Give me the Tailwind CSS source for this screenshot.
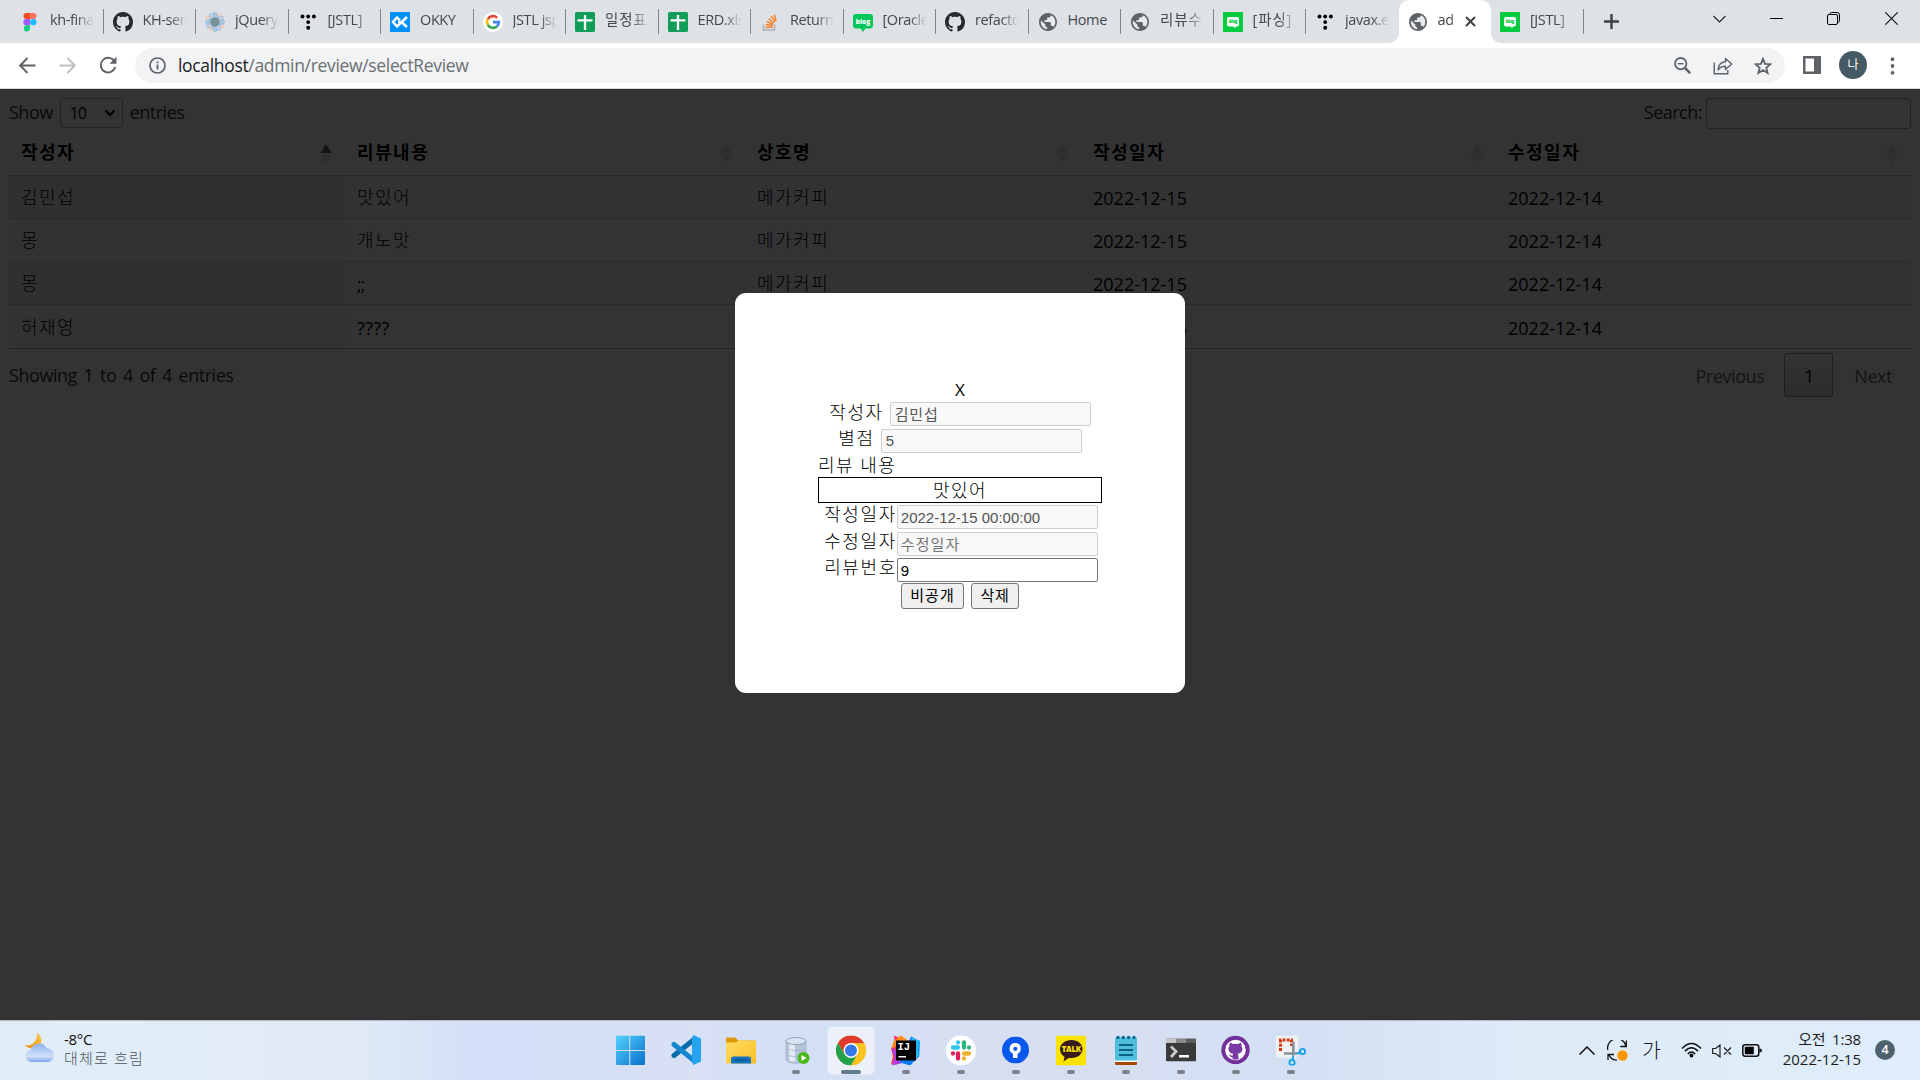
<!DOCTYPE html>
<html lang="ko">
<head>
<meta charset="utf-8">
<title>admin review</title>
<script src="https://cdn.jsdelivr.net/npm/@tailwindcss/browser@4"></script>
</head>
<body class="w-[1920px] h-[1080px] overflow-hidden flex flex-col bg-white text-black font-['Open_Sans','Noto_Sans_CJK_KR',sans-serif]">
<svg class="hidden">
  <symbol id="github" viewBox="0 0 16 16"><path fill="currentColor" d="M8 0C3.58 0 0 3.58 0 8c0 3.54 2.29 6.53 5.47 7.59.4.07.55-.17.55-.38 0-.19-.01-.82-.01-1.49-2.01.37-2.53-.49-2.69-.94-.09-.23-.48-.94-.82-1.13-.28-.15-.68-.52-.01-.53.63-.01 1.08.58 1.23.82.72 1.21 1.87.87 2.33.66.07-.52.28-.87.51-1.07-1.78-.2-3.64-.89-3.64-3.95 0-.87.31-1.59.82-2.15-.08-.2-.36-1.02.08-2.12 0 0 .67-.21 2.2.82.64-.18 1.32-.27 2-.27s1.36.09 2 .27c1.53-1.04 2.2-.82 2.2-.82.44 1.1.16 1.92.08 2.12.51.56.82 1.27.82 2.15 0 3.07-1.87 3.75-3.65 3.95.29.25.54.73.54 1.48 0 1.07-.01 1.93-.01 2.2 0 .21.15.46.55.38A8.01 8.01 0 0 0 16 8c0-4.42-3.58-8-8-8z"/></symbol>
  <symbol id="globe" viewBox="0 0 24 24"><circle cx="12" cy="12" r="9.6" fill="#e8eaed"/><path fill="#5f6368" d="M12 1.2C6.040 1.200 1.200 6.040 1.200 12S6.040 22.800 12 22.800 22.800 17.960 22.800 12 17.960 1.200 12 1.200zm-1 19.400c-4.300-.5-7.700-4.200-7.700-8.600 0-.7.1-1.300.2-1.900L8.800 15v1.100c0 1.200 1 2.200 2.200 2.200v2.300zm7.500-2.700c-.3-.9-1.100-1.500-2.100-1.500h-1.100v-3.300c0-.6-.5-1.100-1.100-1.100H7.700V9.800h2.200c.6 0 1.100-.5 1.100-1.100V6.500h2.200c1.200 0 2.200-1 2.200-2.200v-.4c3.200 1.300 5.400 4.400 5.400 8.100 0 2.300-.9 4.400-2.300 5.900z"/></symbol>
  <symbol id="tistory" viewBox="0 0 20 20"><g fill="#000"><circle cx="4.500" cy="4.500" r="1.950"/><circle cx="10.200" cy="4.500" r="1.950"/><circle cx="15.900" cy="4.500" r="1.950"/><circle cx="10.200" cy="10.100" r="1.950"/><circle cx="10.200" cy="15.700" r="1.950"/></g></symbol>
  <symbol id="sheet" viewBox="0 0 20 20"><rect width="20" height="20" rx="1.600" fill="#109d58"/><path d="M10 3v15M2.500 8.300h15" stroke="#fff" stroke-width="2.300"/></symbol>
  <symbol id="naver" viewBox="0 0 20 20"><rect width="20" height="20" fill="#06cb41"/><path fill="#fff" d="M6 5h8q2 0 2 2v5.500q0 2-2 2h-.8L12 16l-1.500-1.500H6q-2 0-2-2V7q0-2 2-2z"/><text x="10" y="11" text-anchor="middle" font-size="4.500" font-weight="800" fill="#06cb41">blog</text></symbol>
  <symbol id="sort" viewBox="0 0 12 20"><path d="M6 0l5.800 9H.2zM6 19.500L11.800 10.500H.2z" fill="#000" opacity=".125"/></symbol>
</svg>

<!-- tab strip -->
<header class="h-[43px] shrink-0 bg-[#dee1e6] flex text-[14.500px] text-[#45494d] tracking-[-0.4px]">
  <nav class="flex pl-[11px] h-full w-[1584px] shrink-0 [&_span]:-mt-[3px]">
    <div class="w-[92.500px] shrink-0 flex items-center relative pl-[9px]"><svg class="size-5 shrink-0" viewBox="0 0 20 20"><path fill="#f24e1e" d="M6.500 1H10v6H6.500a3 3 0 010-6z"/><path fill="#ff7262" d="M10 1h3.500a3 3 0 010 6H10z"/><path fill="#a259ff" d="M10 7v6.300H6.500a3.150 3.150 0 010-6.300z"/><circle cx="13.300" cy="10.200" r="3.150" fill="#1abcfe"/><path fill="#0acf83" d="M6.500 13.300H10v3a3.100 3.100 0 11-3.500-3z"/></svg><span class="ml-2.5 w-[44px] overflow-hidden whitespace-nowrap mask-r-from-60%">kh-final</span><i class="absolute right-0 top-[9px] w-px h-[25px] bg-[#80868b]"></i></div>
    <div class="w-[92.500px] shrink-0 flex items-center relative pl-[9px]"><svg class="size-5 shrink-0 text-[#24292f]"><use href="#github"/></svg><span class="ml-2.5 w-[44px] overflow-hidden whitespace-nowrap mask-r-from-60%">KH-semi</span><i class="absolute right-0 top-[9px] w-px h-[25px] bg-[#80868b]"></i></div>
    <div class="w-[92.500px] shrink-0 flex items-center relative pl-[9px]"><svg class="size-5 shrink-0" viewBox="0 0 20 20"><g fill="#f9d9c0" fill-opacity=".7" stroke="#f0a884" stroke-width=".5"><ellipse cx="10" cy="10" rx="9.800" ry="3.400" transform="rotate(30 10 10)"/><ellipse cx="10" cy="10" rx="9.800" ry="3.400" transform="rotate(120 10 10)"/></g><g fill="#8cc5e6" fill-opacity=".6" stroke="#62aedb" stroke-width=".5"><ellipse cx="10" cy="10" rx="9.800" ry="3.400"/><ellipse cx="10" cy="10" rx="9.800" ry="3.400" transform="rotate(90 10 10)"/></g><g fill="#b9c9ea" fill-opacity=".5" stroke="#7fa8d8" stroke-width=".5"><ellipse cx="10" cy="10" rx="9.800" ry="3.400" transform="rotate(60 10 10)"/><ellipse cx="10" cy="10" rx="9.800" ry="3.400" transform="rotate(150 10 10)"/></g><circle cx="10" cy="10" r="4.600" fill="#708a8c" opacity=".85"/></svg><span class="ml-2.5 w-[44px] overflow-hidden whitespace-nowrap mask-r-from-60%">jQuery</span><i class="absolute right-0 top-[9px] w-px h-[25px] bg-[#80868b]"></i></div>
    <div class="w-[92.500px] shrink-0 flex items-center relative pl-[9px]"><svg class="size-5 shrink-0"><use href="#tistory"/></svg><span class="ml-2.5 w-[44px] overflow-hidden whitespace-nowrap mask-r-from-60%">[JSTL]</span><i class="absolute right-0 top-[9px] w-px h-[25px] bg-[#80868b]"></i></div>
    <div class="w-[92.500px] shrink-0 flex items-center relative pl-[9px]"><svg class="size-5 shrink-0" viewBox="0 0 20 20"><path fill="#0090f9" d="M0 0h20v20H0z"/><path d="M10 8.300L7 5.500 3 10l4 4.500 10-9.500M11.500 10l5.500 5" fill="none" stroke="#fff" stroke-width="2.500"/><path d="M8 10h3" stroke="#fff" stroke-width="2"/></svg><span class="ml-2.5 w-[44px] overflow-hidden whitespace-nowrap mask-r-from-80%">OKKY</span><i class="absolute right-0 top-[9px] w-px h-[25px] bg-[#80868b]"></i></div>
    <div class="w-[92.500px] shrink-0 flex items-center relative pl-[9px]"><svg class="size-5 shrink-0" viewBox="0 0 20 20"><circle cx="10" cy="10" r="10" fill="#fff"/><g fill="none" stroke-width="2.600"><path stroke="#ea4335" d="M4.800 7.200A5.900 5.900 0 0114.200 5.800"/><path stroke="#fbbc05" d="M4.800 12.800a5.900 5.900 0 010-5.700"/><path stroke="#34a853" d="M4.800 12.800a5.900 5.900 0 009.200 1.500"/><path stroke="#4285f4" d="M10 10.100h5.900a5.900 5.900 0 01-1.900 4.200"/></g></svg><span class="ml-2.5 w-[44px] overflow-hidden whitespace-nowrap mask-r-from-60%">JSTL jsp</span><i class="absolute right-0 top-[9px] w-px h-[25px] bg-[#80868b]"></i></div>
    <div class="w-[92.500px] shrink-0 flex items-center relative pl-[9px]"><svg class="size-5 shrink-0"><use href="#sheet"/></svg><span class="ml-2.5 w-[44px] overflow-hidden whitespace-nowrap mask-r-from-60% tracking-[0.9px]">일정표 -</span><i class="absolute right-0 top-[9px] w-px h-[25px] bg-[#80868b]"></i></div>
    <div class="w-[92.500px] shrink-0 flex items-center relative pl-[9px]"><svg class="size-5 shrink-0"><use href="#sheet"/></svg><span class="ml-2.5 w-[44px] overflow-hidden whitespace-nowrap mask-r-from-60%">ERD.xlsx</span><i class="absolute right-0 top-[9px] w-px h-[25px] bg-[#80868b]"></i></div>
    <div class="w-[92.500px] shrink-0 flex items-center relative pl-[9px]"><svg class="size-5 shrink-0" viewBox="0 0 20 20" fill="none"><path d="M3.500 12.500V18h11v-5.500" stroke="#a8adb3" stroke-width="1.500"/><path d="M5.600 15.300h7M5.800 12.400l6.900 1.100M6.700 9.400l6.400 2.900M8.600 6.500l5.300 4.500M11.300 4.200l3.900 5.700M14.200 2.800l2 6.500" stroke="#f48024" stroke-width="1.500"/></svg><span class="ml-2.5 w-[44px] overflow-hidden whitespace-nowrap mask-r-from-60%">Return v</span><i class="absolute right-0 top-[9px] w-px h-[25px] bg-[#80868b]"></i></div>
    <div class="w-[92.500px] shrink-0 flex items-center relative pl-[9px]"><svg class="size-5 shrink-0" viewBox="0 0 20 20"><path fill="#03c75a" d="M3 2h14q3 0 3 3v8.500q0 3-3 3h-4.500L10 20l-2.500-3.500H3q-3 0-3-3V5q0-3 3-3z"/><text x="10" y="11.600" text-anchor="middle" font-size="6.500" font-weight="800" letter-spacing="0" fill="#fff">blog</text></svg><span class="ml-2.5 w-[44px] overflow-hidden whitespace-nowrap mask-r-from-60%">[Oracle]</span><i class="absolute right-0 top-[9px] w-px h-[25px] bg-[#80868b]"></i></div>
    <div class="w-[92.500px] shrink-0 flex items-center relative pl-[9px]"><svg class="size-5 shrink-0 text-[#24292f]"><use href="#github"/></svg><span class="ml-2.5 w-[44px] overflow-hidden whitespace-nowrap mask-r-from-60%">refactor</span><i class="absolute right-0 top-[9px] w-px h-[25px] bg-[#80868b]"></i></div>
    <div class="w-[92.500px] shrink-0 flex items-center relative pl-[9px]"><svg class="size-5 shrink-0"><use href="#globe"/></svg><span class="ml-2.5 w-[44px] overflow-hidden whitespace-nowrap">Home</span><i class="absolute right-0 top-[9px] w-px h-[25px] bg-[#80868b]"></i></div>
    <div class="w-[92.500px] shrink-0 flex items-center relative pl-[9px]"><svg class="size-5 shrink-0"><use href="#globe"/></svg><span class="ml-2.5 w-[44px] overflow-hidden whitespace-nowrap mask-r-from-60% tracking-[0.9px]">리뷰수정</span><i class="absolute right-0 top-[9px] w-px h-[25px] bg-[#80868b]"></i></div>
    <div class="w-[92.500px] shrink-0 flex items-center relative pl-[9px]"><svg class="size-5 shrink-0"><use href="#naver"/></svg><span class="ml-2.5 w-[44px] overflow-hidden whitespace-nowrap mask-r-from-60% tracking-[0.9px]">[파싱]</span><i class="absolute right-0 top-[9px] w-px h-[25px] bg-[#80868b]"></i></div>
    <div class="w-[92.500px] shrink-0 flex items-center relative pl-[9px]"><svg class="size-5 shrink-0"><use href="#tistory"/></svg><span class="ml-2.5 w-[44px] overflow-hidden whitespace-nowrap mask-r-from-60%">javax.el</span></div>
    <div class="w-[92.500px] shrink-0 flex items-center relative pl-[9px] bg-white rounded-t-[10px] text-[#3c4043]"><svg class="absolute -left-[10px] bottom-0 size-[10px]" viewBox="0 0 10 10"><path fill="#fff" d="M10 0v10H0A10 10 0 0010 0z"/></svg><svg class="absolute -right-[10px] bottom-0 size-[10px]" viewBox="0 0 10 10"><path fill="#fff" d="M0 0v10h10A10 10 0 010 0z"/></svg><svg class="size-5 shrink-0"><use href="#globe"/></svg><span class="ml-2.5 w-[17px] overflow-hidden whitespace-nowrap mask-r-from-80%">admin</span><svg class="size-[11px] ml-[10px]" viewBox="0 0 11 11"><path d="M1 1l9 9M10 1l-9 9" stroke="#3c4043" stroke-width="2"/></svg></div>
    <div class="w-[92.500px] shrink-0 flex items-center relative pl-[9px]"><svg class="size-5 shrink-0"><use href="#naver"/></svg><span class="ml-2.5 w-[44px] overflow-hidden whitespace-nowrap mask-r-from-60%">[JSTL]</span><i class="absolute right-0 top-[9px] w-px h-[25px] bg-[#80868b]"></i></div>
  </nav>
  <svg class="size-[15px] mt-[14px] ml-5" viewBox="0 0 15 15"><path d="M7.500 0v15M0 7.500h15" stroke="#3c4043" stroke-width="2.400"/></svg>
  <div class="flex ml-auto h-[37px] items-center pr-[22px]" >
    <svg class="w-[13px] h-[8px] mr-[44px]" viewBox="0 0 13 8"><path d="M.5 1l6 6 6-6" fill="none" stroke="#222" stroke-width="1.100"/></svg>
    <svg class="w-[13px] h-[13px] mr-[44px]" viewBox="0 0 13 13"><path d="M0 6.500h13" stroke="#000"/></svg>
    <svg class="size-[13px] mr-[45px]" viewBox="0 0 13 13"><g fill="none" stroke="#000"><rect x=".5" y="2.500" width="10" height="10" rx="1.500"/><path d="M3 2.500V2Q3 .5 4.500.5H10q2.500 0 2.500 2.500v5.500Q12.500 10 11 10.500"/></g></svg>
    <svg class="size-[13px]" viewBox="0 0 13 13"><path d="M.3.3l12.400 12.400M12.700.3L.3 12.700" stroke="#111" stroke-width="1.100"/></svg>
  </div>
</header>

<!-- toolbar -->
<div class="h-[46px] shrink-0 bg-white border-b border-[#d5d7da] flex items-center pl-[19px] pr-[25px]">
  <svg class="size-[17px]" viewBox="0 0 17 17"><path d="M16.500 8.500H1.500M8.500 1L1.200 8.500 8.500 16" fill="none" stroke="#5f6368" stroke-width="1.900"/></svg>
  <svg class="size-[17px] ml-[23px]" viewBox="0 0 17 17"><path d="M.5 8.500h15M8.500 1l7.300 7.500L8.500 16" fill="none" stroke="#bdc0c3" stroke-width="1.900"/></svg>
  <svg class="size-[18px] ml-[23px] -mt-px" viewBox="0 0 18 18"><path d="M15.500 5.500A7.300 7.300 0 1016.200 11" fill="none" stroke="#5f6368" stroke-width="1.900"/><path d="M17.500.8v7h-7z" fill="#5f6368"/></svg>
  <div class="ml-[18px] w-[1650px] h-[35px] rounded-full bg-[#f1f3f4] flex items-center pl-[14px] pr-[13px]">
    <svg class="size-[17px]" viewBox="0 0 17 17"><circle cx="8.500" cy="8.500" r="7.500" fill="none" stroke="#5f6368" stroke-width="1.700"/><path d="M8.500 7.600v4.900M8.500 4.500v1.800" stroke="#5f6368" stroke-width="1.800"/></svg>
    <span class="ml-3 -mt-px text-[17.500px] tracking-[-0.330px] text-[#6b6f73]"><span class="text-[#202124]">localhost</span>/admin/review/selectReview</span>
    <svg class="size-[17px] ml-auto" viewBox="0 0 17 17"><g fill="none" stroke="#5f6368" stroke-width="1.800"><circle cx="6.700" cy="6.700" r="5.700"/><path d="M11 11l5.200 5.200" stroke-width="2.500"/><path d="M3.800 6.700h5.800" stroke-width="1.400"/></g></svg>
    <svg class="w-[20px] h-[18px] ml-[22px]" viewBox="0 0 20 18"><g fill="none" stroke="#5f6368" stroke-width="1.400"><path d="M1.200 5.500v11.300h13.600V13"/><path d="M12.500 1.500L18.700 7l-6.200 5.500V9.300C9 9.300 6.800 10.300 5 13c.3-4.500 3-8 7.500-8.300z" stroke-linejoin="round"/></g></svg>
    <svg class="size-[18px] ml-[21px]" viewBox="0 0 18 18"><path d="M9 1.800l2 5 5.400.4-4.100 3.500 1.300 5.300L9 13.100 4.400 16l1.300-5.300L1.600 7.200 7 6.800z" fill="none" stroke="#5f6368" stroke-width="1.800"/></svg>
  </div>
  <svg class="size-[18px] ml-[18px] -mt-px" viewBox="0 0 18 18"><path fill="#5f6368" d="M0 0h18v18H0z"/><path fill="#fff" d="M2.500 2.500h8.500v13H2.500z"/></svg>
  <div class="size-7 ml-[18px] -mt-px rounded-full bg-[#455a64] text-white text-[12px] flex items-center justify-center">나</div>
  <svg class="w-[5px] h-[18px] ml-auto" viewBox="0 0 5 18"><g fill="#5f6368"><circle cx="2.500" cy="2.200" r="1.900"/><circle cx="2.500" cy="9" r="1.900"/><circle cx="2.500" cy="15.800" r="1.900"/></g></svg>
</div>

<!-- page -->
<main class="relative h-[931px] shrink-0 px-[9px] pt-[9px] text-[18px] leading-6">
  <div class="flex justify-between h-[31px] text-[#333] tracking-[-0.500px]">
    <div class="flex items-start"><span class="pt-[2px]">Show</span><div class="ml-[7px] w-[63px] h-[30px] border border-[#aaa] rounded-[3px] flex items-center justify-between pl-[9px] pr-[6px] text-[15.500px] text-black">10<svg class="w-[12px] h-[8px]" viewBox="0 0 12 8"><path d="M1.500 1.500L6 6l4.500-4.500" fill="none" stroke="#000" stroke-width="2.200"/></svg></div><span class="ml-[7px] pt-[2px]">entries</span></div>
    <div class="flex items-start"><span class="pt-[2px]">Search:</span><input class="ml-1 w-[205px] h-[31px] border border-[#aaa] rounded-[3px]"></div>
  </div>
  <table class="w-[1902px] table-fixed border-separate border-spacing-0 text-left">
    <colgroup><col class="w-[336px]"><col class="w-[400px]"><col class="w-[336px]"><col class="w-[415px]"><col class="w-[415px]"></colgroup>
    <thead class="tracking-[1.500px]"><tr class="h-[47px]">
      <th class="border-b border-black/30 pl-3 pr-[13px] pb-[1px]"><div class="flex items-center justify-between">작성자<svg class="w-[12px] h-[20px] mt-1" viewBox="0 0 12 20"><path d="M6 0l5.800 9H.2z" opacity=".6"/><path d="M6 19.500L11.800 10.500H.2z" opacity=".125"/></svg></div></th>
      <th class="border-b border-black/30 pl-3 pr-[13px] pb-[1px]"><div class="flex items-center justify-between">리뷰내용<svg class="w-[12px] h-[20px] mt-1"><use href="#sort"/></svg></div></th>
      <th class="border-b border-black/30 pl-3 pr-[13px] pb-[1px]"><div class="flex items-center justify-between">상호명<svg class="w-[12px] h-[20px] mt-1"><use href="#sort"/></svg></div></th>
      <th class="border-b border-black/30 pl-3 pr-[13px] pb-[1px]"><div class="flex items-center justify-between">작성일자<svg class="w-[12px] h-[20px] mt-1"><use href="#sort"/></svg></div></th>
      <th class="border-b border-black/30 pl-3 pr-[13px] pb-[1px]"><div class="flex items-center justify-between">수정일자<svg class="w-[12px] h-[20px] mt-1"><use href="#sort"/></svg></div></th>
    </tr></thead>
    <tbody class="[&_td]:pl-3 [&_td]:h-[43px] [&_td]:border-b [&_td]:border-black/15 [&_td:nth-child(n+4)]:pt-0.5">
      <tr class="bg-black/[0.023]"><td class="bg-black/[0.03] tracking-[1.500px] font-light">김민섭</td><td class="tracking-[1.500px] font-light">맛있어</td><td class="tracking-[1.500px] font-light">메가커피</td><td>2022-12-15</td><td>2022-12-14</td></tr>
      <tr><td class="bg-black/[0.019] tracking-[1.500px] font-light">몽</td><td class="tracking-[1.500px] font-light">개노맛</td><td class="tracking-[1.500px] font-light">메가커피</td><td>2022-12-15</td><td>2022-12-14</td></tr>
      <tr class="bg-black/[0.023]"><td class="bg-black/[0.03] tracking-[1.500px] font-light">몽</td><td class="pt-0.5 tracking-[-1px]">;;</td><td class="tracking-[1.500px] font-light">메가커피</td><td>2022-12-15</td><td>2022-12-14</td></tr>
    </tbody>
    <tbody class="[&_td]:pl-3 [&_td]:h-[44px] [&_td]:border-b [&_td]:border-black/30 [&_td:nth-child(n+4)]:pt-0.5">
      <tr><td class="bg-black/[0.019] tracking-[1.500px] font-light">허재영</td><td class="pt-0.5 tracking-[0.4px]">????</td><td class="tracking-[1.500px] font-light">메가커피</td><td>2022-12-15</td><td>2022-12-14</td></tr>
    </tbody>
  </table>
  <div class="flex items-center justify-between pt-[4px]">
    <div class="text-[#333] [word-spacing:2.400px] tracking-[-0.450px]">Showing 1 to 4 of 4 entries</div>
    <div class="flex items-center text-[#666] tracking-[-0.450px]"><span class="pt-0.5">Previous</span><span class="ml-5 w-[49px] h-[44px] border border-[#979797] rounded-[2px] bg-linear-to-b from-white to-[#dcdcdc] text-black flex items-center justify-center pt-px">1</span><span class="ml-[21px] mr-[19px] pt-0.5">Next</span></div>
  </div>

  <!-- modal -->
  <div class="absolute inset-0 bg-black/80"></div>
  <section class="absolute left-[735px] top-[204px] w-[450px] h-[400px] rounded-[11px] bg-white flex flex-col items-center pt-[85px] [&_span]:font-light">
    <div class="h-[23px] text-[17px]">X</div>
    <div class="flex h-[27px]"><span class="tracking-[1.600px] -mt-px mr-[6px]">작성자</span><input class="w-[201px] h-[24px] mt-px border border-[#cdcdcd] rounded-[2px] bg-[#f8f8f8] text-[#545454] text-[15px] px-1 tracking-[0.8px]" value="김민섭"></div>
    <div class="flex h-[26px]"><span class="tracking-[1.600px] -mt-[2px] mr-[6px]">별점</span><input class="w-[201px] h-[24px] mt-px border border-[#cdcdcd] rounded-[2px] bg-[#f8f8f8] text-[#545454] text-[15px] px-1 font-['Liberation_Sans']" value="5"></div>
    <div class="w-[284px] h-[24px] tracking-[1.500px] -mt-px"><span>리뷰 내용</span></div>
    <div class="w-[284px] h-[26px] border border-black text-center tracking-[1.500px] mb-px"><span>맛있어</span></div>
    <div class="flex h-[27px] translate-x-px"><span class="tracking-[1.600px] -mt-[2px]">작성일자</span><input class="w-[201px] h-[24px] mt-px border border-[#cdcdcd] rounded-[2px] bg-[#f8f8f8] text-[#545454] text-[15px] px-[3px] font-['Liberation_Sans'] pt-0.5" value="2022-12-15 00:00:00"></div>
    <div class="flex h-[26px] translate-x-px"><span class="tracking-[1.600px] -mt-[2px]">수정일자</span><input class="w-[201px] h-[24px] mt-px border border-[#cdcdcd] rounded-[2px] bg-[#f8f8f8] text-[#757575] text-[15px] px-[3px] tracking-[1.100px]" value="수정일자"></div>
    <div class="flex h-[26px] translate-x-px"><span class="tracking-[1.600px] -mt-[2px]">리뷰번호</span><input class="w-[201px] h-[24px] mt-px border border-[#767676] rounded-[2px] bg-white text-black text-[15px] px-[3px] font-['Liberation_Sans'] pt-0.5" value="9"></div>
    <div class="flex gap-[7px] text-[15px]"><button class="w-[63px] h-[26px] border border-[#767676] rounded-[3px] bg-[#efefef] tracking-[1px] leading-5 pb-0.5">비공개</button><button class="w-[48px] h-[26px] border border-[#767676] rounded-[3px] bg-[#efefef] tracking-[0.8px] leading-5 pb-0.5">삭제</button></div>
  </section>
</main>

<!-- taskbar -->
<footer class="h-[60px] shrink-0 border-t border-[#b4b8c4] bg-[linear-gradient(90deg,#e0edf7_0%,#e1ebf6_18%,#d2dff7_25%,#d8e0f4_36%,#d3e0f5_42%,#d9def1_54%,#d3e0f4_67%,#deebf7_80%,#dfedfa_100%)] flex">
  <div class="w-[603px] shrink-0 flex pl-[24px] pt-[10px]">
    <svg class="w-[32px] h-[32px]" viewBox="0 0 32 32"><defs><linearGradient id="cl" x2="0" y2="1"><stop stop-color="#8fb2ee"/><stop offset=".7" stop-color="#cfe0fa"/><stop offset="1" stop-color="#7fa6ea"/></linearGradient><linearGradient id="mo" x1="1" x2="0" y2="1"><stop stop-color="#f9ce45"/><stop offset="1" stop-color="#f18a1b"/></linearGradient></defs><path fill="url(#mo)" d="M13 2c5 3 6 9 2 13-4 4-11 3-14-1 5 1 8-1 10-4 2-3 2-5 2-8z"/><path fill="url(#cl)" d="M7 31a6 6 0 01-.5-11.800A9 9 0 0123 17.200 7 7 0 0124.500 31z"/></svg>
    <div class="ml-2 -mt-px text-[15px] leading-[19px] text-[#111]"><div class="tracking-[-0.3px]">-8°C</div><div class="text-[#4a5460] tracking-[1.200px] font-light">대체로 흐림</div></div>
  </div>
  <div class="w-[715px] shrink-0 grid grid-cols-13 [&>div]:relative [&>div]:flex [&>div]:items-center [&>div]:justify-center [&>div>svg]:-translate-y-[0.500px] [&_i]:absolute [&_i]:left-[24px] [&_i]:bottom-[6px] [&_i]:w-2 [&_i]:h-1 [&_i]:rounded-full [&_i]:bg-[#7b818d]">
    <div><svg class="size-[30px] -ml-px" viewBox="0 0 30 30"><defs><linearGradient id="wi" x2="1" y2="1"><stop stop-color="#55d3fb"/><stop offset="1" stop-color="#0a6fd0"/></linearGradient></defs><path fill="url(#wi)" d="M1 1q0-1 1-1h12.200v14.400H1zM15.200 0H29q1 0 1 1v13.400H15.200zM1 15.400h13.200V29.500H2q-1 0-1-1zM15.200 15.400H30v13q0 1-1 1H15.200z"/></svg></div>
    <div><svg class="size-[31px] ml-[2px]" viewBox="0 0 31 31"><path d="M23 5L3 21" stroke="#0a6bab" stroke-width="5" stroke-linecap="round"/><path d="M3 10l20 16" stroke="#1287cf" stroke-width="5" stroke-linecap="round"/><path fill="#26a3ee" d="M22.500.5L30 4v23l-7.500 3.500L21 28V3z"/></svg></div>
    <div><svg class="w-[31px] h-[28px]" viewBox="0 0 31 28"><defs><linearGradient id="fo" x2="1" y2="1"><stop stop-color="#ffdd62"/><stop offset="1" stop-color="#f9bf28"/></linearGradient></defs><path fill="#dd9b0b" d="M2 1h8l3.500 3H29v8H1V2q0-1 1-1z"/><path fill="url(#fo)" d="M1 6h10l2.500-2H30q1 0 1 1v22H1z"/><path fill="#1271bd" d="M8.500 20h15q2.500 0 2.500 2.500V27H6v-4.500Q6 20 8.500 20z"/><path d="M9.500 23.500h13" stroke="#0a4479" stroke-width="1.200"/></svg></div>
    <div><svg class="w-[26px] h-[28px] ml-[2px]" viewBox="0 0 26 28"><path fill="#b4c5d9" d="M2 4v19c0 5 20 5 20 0V4z"/><path fill="#e2ebf4" d="M5 7h6v18H7q-2-1-2-3z"/><ellipse cx="12" cy="4.500" rx="10" ry="3.500" fill="#d9e5f1" stroke="#8fa2ba"/><path d="M2 11c0 4 20 4 20 0M2 17c0 4 20 4 20 0M2 5v18c0 5 20 5 20 0V5" fill="none" stroke="#a3b4ca" stroke-width=".8"/><circle cx="19.500" cy="21.500" r="6" fill="#4bb819"/><path fill="#fff" d="M17.500 18.500l5 3-5 3z"/></svg><i></i></div>
    <div><span class="absolute left-[4px] top-[5px] w-[48px] h-[49px] rounded-[5px] bg-[#ecf0fa] border border-[#dfe5f2]"></span><svg class="relative size-[30px]" viewBox="0 0 30 30"><circle cx="15" cy="15" r="15" fill="#fcc31e"/><path fill="#df3b2f" d="M2 7.500A15 15 0 0128 7.500H15L8.500 18.700z"/><path fill="#22a04c" d="M2 7.500l6.500 11.200L21.500 18.700 15 30A15 15 0 012 7.500z"/><path fill="#fcc31e" d="M15 7.500h13A15 15 0 0115 30l6.500-11.200z"/><circle cx="15" cy="15" r="7.500" fill="#fff"/><circle cx="15" cy="15" r="6" fill="#3478e8"/></svg><b class="absolute left-[18px] bottom-[6px] w-5 h-1 rounded-full bg-[#617d8c]"></b></div>
    <div><svg class="size-[30px] ml-px" viewBox="0 0 30 30"><path fill="#fb2f63" d="M3 0l10 4-3 22-10 3 2-8-2-8 4-3z"/><path fill="#ff8a17" d="M10 0l7 5-8 3-9 6 3-9z"/><path fill="#a942df" d="M0 12l8 4 2 12-9 2 3-8z"/><path fill="#087cfa" d="M20 1l9 5-1 15-9 9-10-3z"/><path fill="#1fb7f4" d="M20 0l4 4 5 1-2 10 2 4-5 5z"/><path d="M5 5h20v20H5z"/><text x="6.500" y="14.500" font-family="Liberation Mono" font-size="10.500" font-weight="700" fill="#fff">IJ</text><path fill="#fff" d="M7.500 20.500H15v1.600H7.500z"/></svg><i></i></div>
    <div><svg class="size-[30px]" viewBox="0 0 30 30"><circle cx="15" cy="15" r="15" fill="#fff"/><g stroke-width="4.300" stroke-linecap="round"><path stroke="#36c5f0" d="M7 12h5M12 7v.01"/><path stroke="#2eb67d" d="M18 7v5M23 12v.01"/><path stroke="#ecb22e" d="M18 18h5M18 23v.01"/><path stroke="#e01e5a" d="M12 18v5M7 18v.01"/></g></svg><i></i></div>
    <div><svg class="size-[27px]" viewBox="0 0 27 27"><circle cx="13.500" cy="13.500" r="13.500" fill="#0758ed"/><path fill="#fff" d="M11 21.500v-4.300a5.600 5.600 0 117.800-5c0 2.500-1.300 4.200-3.300 5v4.300z"/><circle cx="13.300" cy="12.300" r="2.100" fill="#0758ed"/></svg><i></i></div>
    <div><svg class="size-[30px]" viewBox="0 0 30 30"><rect width="30" height="30" rx="1" fill="#fae300"/><path fill="#391b1b" d="M15.500 4.500c6.500 0 11 4 11 9s-4.500 9-11 9l-3 0L7.500 26l1-4.500c-3-2-4.500-5-4.500-8 0-5 5-9 11.500-9z"/><text x="15.300" y="16.300" text-anchor="middle" font-size="7.800" font-weight="800" letter-spacing="-.3" fill="#fae300">TALK</text></svg><i></i></div>
    <div><svg class="w-[24px] h-[31px]" viewBox="0 0 24 31"><rect x="1" y="3" width="22" height="24" rx="1.500" fill="#50bddd"/><path fill="#fff" d="M1 26h22v2H1z"/><path fill="#a34a08" d="M1 27.500h22v2q0 1-1 1H2q-1 0-1-1z"/><path d="M5 10.500h14M5 15.500h14M5 20.500h14" stroke="#0b637f" stroke-width="1.800"/><g fill="#0a6b91"><circle cx="4" cy="3" r="1.700"/><circle cx="9.300" cy="3" r="1.700"/><circle cx="14.600" cy="3" r="1.700"/><circle cx="20" cy="3" r="1.700"/></g></svg><i></i></div>
    <div><svg class="w-[30px] h-[23px]" viewBox="0 0 30 23"><rect width="30" height="23" rx="1.300" fill="#3a3a3a"/><path fill="#c5c5c5" d="M1 0h9.500v4.500H0V1q0-1 1-1z"/><path fill="#8b8b8b" d="M10.500 0H20v4.500h-9.500z"/><path fill="#5b5b5b" d="M20 0h9q1 0 1 1v3.500H20z"/><path d="M5 8l5 5-5 5.500" fill="none" stroke="#c9c9c9" stroke-width="2.800"/><path fill="#fff" d="M13 16.500h10V19H13z"/></svg><i></i></div>
    <div><svg class="size-[29px]" viewBox="0 0 29 29"><circle cx="14.500" cy="14.500" r="14.200" fill="#74309a"/><circle cx="14.500" cy="14.500" r="10.300" fill="#fff"/><path fill="#7a3aa5" d="M9 7l3 1.500q2.500-.6 5 0L20 7q1 2 .5 3.500 1.500 2 .7 4.500-.8 3-4.700 3.300 1 1 1 2.500V24h-6v-2.500c-3 .5-2.500-2-4-2.500 2-.5 2 1.500 4 1.200.1-1 .5-1.500 1-1.900-4-.3-5-3-5-5.300 0-1 .5-2 1-2.500Q8 9 9 7z"/></svg><i></i></div>
    <div><svg class="w-[30px] h-[30px]" viewBox="0 0 30 30"><rect width="22" height="22" rx="2" fill="#f1f1f2"/><path d="M4.500 15.500v-11h11v6" fill="none" stroke="#d83b0b" stroke-width="3" stroke-dasharray="3 1.300"/><path d="M17.300 6v14M8 18h13" stroke="#85919d" stroke-width="2.600"/><g fill="none" stroke="#13a3e8" stroke-width="1.900"><circle cx="26.500" cy="16" r="2.600"/><circle cx="16" cy="27" r="2.600"/><path d="M21 18l3-1M17.300 20l-.7 4"/></g></svg><i></i></div>
  </div>
  <div class="flex-1 flex text-[#1c1c1c] items-center pl-[261px] pr-[25px]">
    <svg class="w-[16px] h-[9px]" viewBox="0 0 16 9"><path d="M.5 8.500L8 1l7.500 7.500" fill="none" stroke="#111" stroke-width="1.500"/></svg>
    <svg class="w-[21px] h-[21px] ml-[12px]" viewBox="0 0 21 21"><g fill="none" stroke="#111" stroke-width="1.300"><path d="M.8 10A9 9 0 0119 6M19.300.5v6h-6M10 20.200a9 9 0 01-8-5.200M1 20v-5.500h6"/></g><circle cx="15.500" cy="15.500" r="5.200" fill="#ff9800"/></svg>
    <span class="ml-[14px] text-[20.500px] font-light">가</span>
    <svg class="w-[21px] h-[16px] ml-[20px] -mt-px" viewBox="0 0 21 16"><g fill="none" stroke="#111" stroke-width="1.500"><path d="M1 6.500q9.500-10 19 0M4 9.200q6.500-7 13 0M6.800 12q3.700-4.200 7.400 0"/></g><circle cx="10.500" cy="13.500" r="1.900"/></svg>
    <svg class="w-[20px] h-[14px] ml-[10px]" viewBox="0 0 20 14"><g fill="none" stroke="#222" stroke-width="1.200"><path d="M.7 4.500h3L8 1v12L3.700 9.500h-3zM12 3.500l7 7M19 3.500l-7 7"/></g></svg>
    <svg class="w-[20px] h-[13px] ml-[10px]" viewBox="0 0 20 13"><rect x=".8" y=".8" width="16" height="11.400" rx="2.500" fill="none" stroke="#111" stroke-width="1.500"/><rect x="2.800" y="2.800" width="9" height="7.400" rx=".6"/><path d="M17.500 4.500q2.500 0 2.500 2t-2.500 2z"/></svg>
    <div class="ml-auto text-right text-[15px] leading-[20px] -mt-1"><div class="tracking-[-0.2px] [word-spacing:3px]">오전 1:38</div><div>2022-12-15</div></div>
    <div class="ml-[14px] size-5 -mt-px rounded-full bg-[#4e626e] text-white text-[12.500px] font-semibold flex items-center justify-center">4</div>
  </div>
</footer>
</body>
</html>
